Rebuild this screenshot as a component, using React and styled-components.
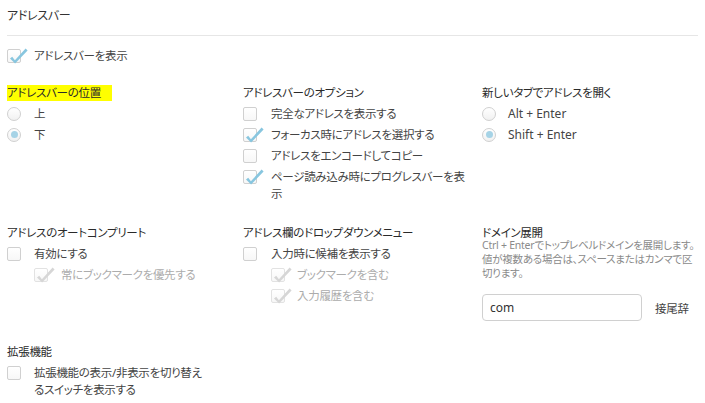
import React from "react";
import styled, { createGlobalStyle } from "styled-components";

const GlobalStyle = createGlobalStyle`
  html, body { margin: 0; padding: 0; background: #fff; }
  body {
    font-family: "Noto Sans", "Noto Sans CJK JP", sans-serif;
    font-size: 11.5px;
    letter-spacing: -0.3px;
    color: #444;
    font-feature-settings: "palt";
  }
`;

const Page = styled.div`
  width: 705px;
  box-sizing: border-box;
  padding: 0 7px;
`;

const Title = styled.div`
  font-size: 12px;
  line-height: 20px;
  padding: 6px 0 9px;
  color: #333;
  border-bottom: 1px solid #e6e6e6;
`;

const TopRow = styled.div`
  margin-top: 11px;
`;

const Grid = styled.div`
  display: grid;
  grid-template-columns: 236px 239px 1fr;
  row-gap: 22px;
  margin-top: 20px;
`;

const Section = styled.div`
  display: flex;
  flex-direction: column;
  min-width: 0;
`;

const Heading = styled.div`
  color: #2a2a2a;
  line-height: ${p => (p.$compact ? "10px" : "18px")};
  padding-top: ${p => (p.$compact ? "4px" : "0")};
  margin-bottom: ${p => (p.$compact ? "0" : "3px")};
`;

const Marked = styled.span`
  display: inline-block;
  background: #ffff00;
  padding-right: 11px;
  line-height: 16px;
`;

const List = styled.div`
  display: flex;
  flex-direction: column;
  gap: 4px;
`;

const Item = styled.label`
  display: flex;
  align-items: flex-start;
  line-height: 17px;
  padding-left: ${p => p.$indent || 0}px;
`;

const Slot = styled.span`
  flex: none;
  width: ${p => p.$w || 27}px;
  height: 17px;
  display: flex;
  align-items: center;
`;

const Text = styled.span`
  color: ${p => (p.$disabled ? "#acacac" : "#444")};
  font-size: ${p => (p.$latin ? "12px" : "inherit")};
  letter-spacing: ${p => (p.$latin ? "0" : "inherit")};
`;

const Box = styled.span`
  position: relative;
  display: block;
  width: 14px;
  height: 14px;
  box-sizing: border-box;
  border: 1px solid ${p => (p.$disabled ? "#e2e2e2" : "#d0d0d0")};
  border-radius: 2px;
  background: linear-gradient(#ffffff, #f7f7f7);
`;

const CheckMark = styled.svg`
  position: absolute;
  left: 0;
  top: 0;
  width: 20px;
  height: 16px;
  overflow: visible;
`;

const Circle = styled.span`
  display: flex;
  align-items: center;
  justify-content: center;
  width: 14px;
  height: 14px;
  box-sizing: border-box;
  border-radius: 50%;
  border: 1px solid #d0d0d0;
  background: linear-gradient(#ffffff, #f1f1f1);
  &::after {
    content: "";
    width: 7px;
    height: 7px;
    border-radius: 50%;
    background: ${p => (p.$checked ? "#a6d3e6" : "transparent")};
  }
`;

const Desc = styled.div`
  font-size: 10.5px;
  letter-spacing: -0.25px;
  line-height: 14px;
  color: #8a8a8a;
  white-space: nowrap;
`;

const InputRow = styled.div`
  display: flex;
  align-items: center;
  gap: 13px;
  margin-top: 14px;
`;

const TextInput = styled.input`
  width: 160px;
  height: 27px;
  box-sizing: border-box;
  border: 1px solid #d0d0d0;
  border-radius: 4px;
  padding: 0 7px;
  font-family: "Noto Sans", "Noto Sans CJK JP", sans-serif;
  font-size: 12px;
  letter-spacing: 0;
  color: #333;
  outline: none;
  background: #fff;
`;

const Suffix = styled.span`
  color: #444;
`;

function Checkbox({ checked, disabled }) {
  return (
    <Box $disabled={disabled}>
      {checked && (
        <CheckMark viewBox="0 0 20 16">
          <polygon
            points="2,8.6 4.2,6.8 6.9,10.2 17.6,-1.4 19.6,0.4 7.1,13.6"
            fill={disabled ? "#d6d6d6" : "#88c6df"}
          />
        </CheckMark>
      )}
    </Box>
  );
}

function CheckItem({ checked, disabled, indent, slot, children }) {
  return (
    <Item $indent={indent}>
      <Slot $w={slot}>
        <Checkbox checked={checked} disabled={disabled} />
      </Slot>
      <Text $disabled={disabled}>{children}</Text>
    </Item>
  );
}

function RadioItem({ checked, slot, latin, children }) {
  return (
    <Item>
      <Slot $w={slot}>
        <Circle $checked={checked} />
      </Slot>
      <Text $latin={latin}>{children}</Text>
    </Item>
  );
}

export default function App() {
  return (
    <>
      <GlobalStyle />
      <Page>
        <Title>アドレスバー</Title>
        <TopRow>
          <CheckItem checked>アドレスバーを表示</CheckItem>
        </TopRow>
        <Grid>
          <Section>
            <Heading>
              <Marked>アドレスバーの位置</Marked>
            </Heading>
            <List>
              <RadioItem>上</RadioItem>
              <RadioItem checked>下</RadioItem>
            </List>
          </Section>
          <Section>
            <Heading>アドレスバーのオプション</Heading>
            <List>
              <CheckItem slot={28}>完全なアドレスを表示する</CheckItem>
              <CheckItem slot={28} checked>フォーカス時にアドレスを選択する</CheckItem>
              <CheckItem slot={28}>アドレスをエンコードしてコピー</CheckItem>
              <CheckItem slot={28} checked>
                ページ読み込み時にプログレスバーを表<br />示
              </CheckItem>
            </List>
          </Section>
          <Section>
            <Heading>新しいタブでアドレスを開く</Heading>
            <List>
              <RadioItem slot={26} latin>Alt + Enter</RadioItem>
              <RadioItem slot={26} latin checked>Shift + Enter</RadioItem>
            </List>
          </Section>

          <Section>
            <Heading>アドレスのオートコンプリート</Heading>
            <List>
              <CheckItem>有効にする</CheckItem>
              <CheckItem indent={27} checked disabled>常にブックマークを優先する</CheckItem>
            </List>
          </Section>
          <Section>
            <Heading>アドレス欄のドロップダウンメニュー</Heading>
            <List>
              <CheckItem slot={28}>入力時に候補を表示する</CheckItem>
              <CheckItem slot={26} indent={28} checked disabled>ブックマークを含む</CheckItem>
              <CheckItem slot={26} indent={28} checked disabled>入力履歴を含む</CheckItem>
            </List>
          </Section>
          <Section>
            <Heading $compact>ドメイン展開</Heading>
            <Desc>
              Ctrl + Enterでトップレベルドメインを展開します。<br />
              値が複数ある場合は、スペースまたはカンマで区<br />
              切ります。
            </Desc>
            <InputRow>
              <TextInput defaultValue="com" />
              <Suffix>接尾辞</Suffix>
            </InputRow>
          </Section>

          <Section>
            <Heading>拡張機能</Heading>
            <List>
              <CheckItem>
                拡張機能の表示/非表示を切り替え<br />るスイッチを表示する
              </CheckItem>
            </List>
          </Section>
        </Grid>
      </Page>
    </>
  );
}
